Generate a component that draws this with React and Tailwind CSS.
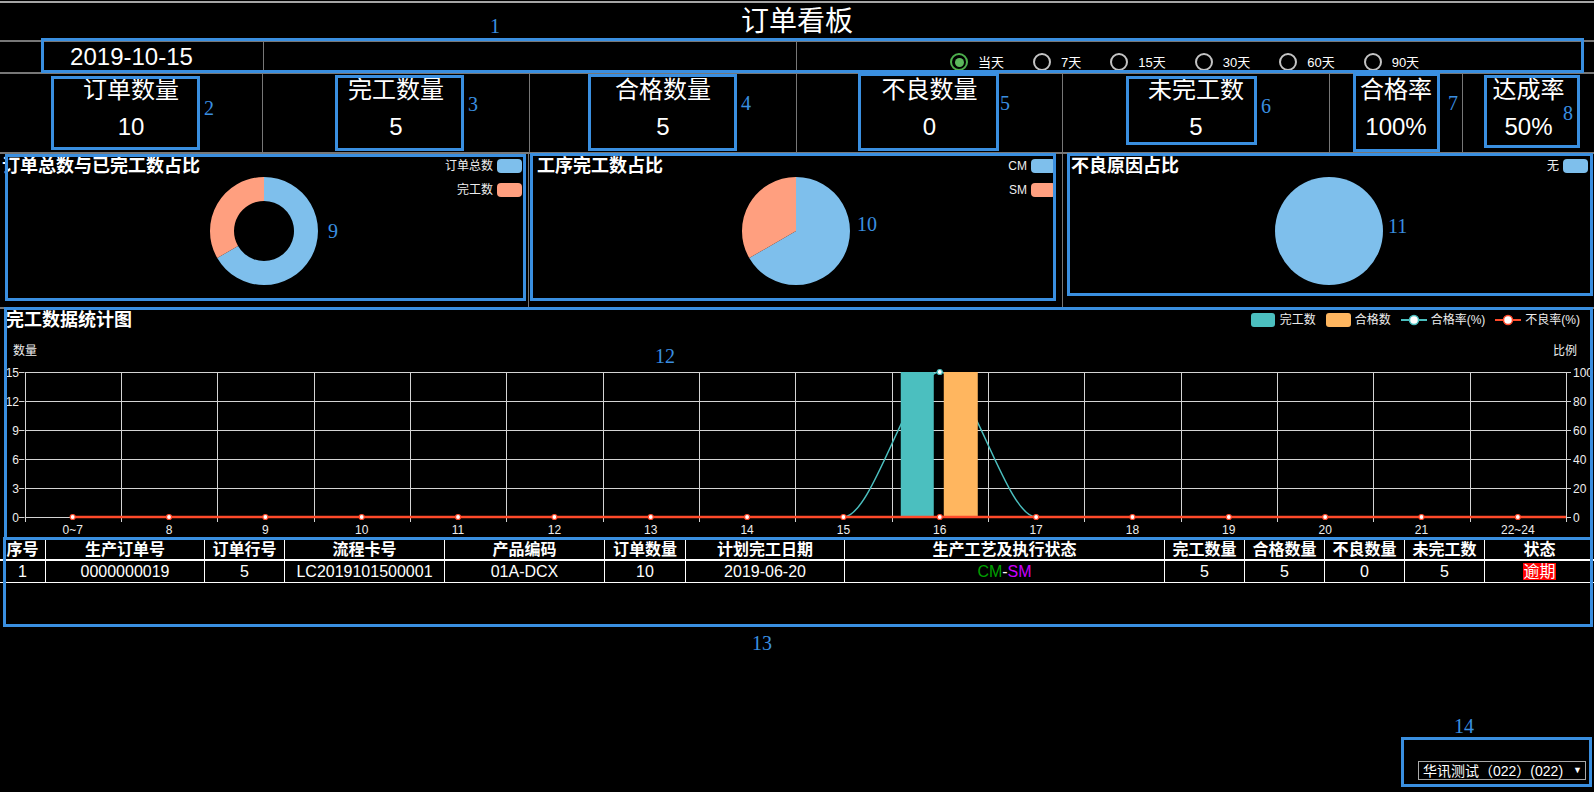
import React from "react";

const STATS = [
  { label: "订单数量", value: "10" },
  { label: "完工数量", value: "5" },
  { label: "合格数量", value: "5" },
  { label: "不良数量", value: "0" },
  { label: "未完工数", value: "5" },
  { label: "合格率", value: "100%" },
  { label: "达成率", value: "50%" },
];

const RANGES = ["当天", "7天", "15天", "30天", "60天", "90天"];

const HOURS = ["0~7", "8", "9", "10", "11", "12", "13", "14", "15", "16", "17", "18", "19", "20", "21", "22~24"];

const COLS = ["序号", "生产订单号", "订单行号", "流程卡号", "产品编码", "订单数量", "计划完工日期", "生产工艺及执行状态", "完工数量", "合格数量", "不良数量", "未完工数", "状态"];

// annotation overlays (numbered blue boxes)
const MARKS = [
  { n: "1", box: "left-[41px] top-[38px] w-[1543px] h-[35px]", label: "left-[490px] top-[16px]" },
  { n: "2", box: "left-[51px] top-[76px] w-[149px] h-[74px]", label: "left-[204px] top-[98px]" },
  { n: "3", box: "left-[335px] top-[75px] w-[129px] h-[76px]", label: "left-[468px] top-[94px]" },
  { n: "4", box: "left-[588px] top-[74px] w-[149px] h-[77px]", label: "left-[741px] top-[93px]" },
  { n: "5", box: "left-[858px] top-[73px] w-[141px] h-[78px]", label: "left-[1000px] top-[93px]" },
  { n: "6", box: "left-[1126px] top-[76px] w-[131px] h-[69px]", label: "left-[1261px] top-[96px]" },
  { n: "7", box: "left-[1353px] top-[73px] w-[87px] h-[79px]", label: "left-[1448px] top-[93px]" },
  { n: "8", box: "left-[1484px] top-[75px] w-[96px] h-[73px]", label: "left-[1563px] top-[103px]" },
  { n: "9", box: "left-[5px] top-[154px] w-[521px] h-[147px]", label: "left-[328px] top-[221px]" },
  { n: "10", box: "left-[530px] top-[153px] w-[526px] h-[148px]", label: "left-[857px] top-[214px]" },
  { n: "11", box: "left-[1067px] top-[153px] w-[526px] h-[143px]", label: "left-[1388px] top-[216px]" },
  { n: "12", box: "left-[4px] top-[307px] w-[1589px] h-[233px]", label: "left-[655px] top-[346px]" },
  { n: "13", box: "left-[3px] top-[537px] w-[1590px] h-[90px]", label: "left-[752px] top-[633px]" },
  { n: "14", box: "left-[1401px] top-[737px] w-[191px] h-[50px]", label: "left-[1454px] top-[716px]" },
];

function Mark({ n, box, label }) {
  return (
    <>
      <div className={`absolute border-[3px] border-[#3a8fe0] pointer-events-none ${box}`} />
      <span className={`absolute text-[20px] leading-none text-[#3a8fe0] font-['Liberation_Serif',serif] ${label}`}>{n}</span>
    </>
  );
}

function Radio({ label, checked }) {
  return (
    <div className="flex items-center">
      <span className={`w-[18px] h-[18px] rounded-full border-2 flex items-center justify-center ${checked ? "border-[#4cae4c]" : "border-[#c4c4c4]"}`}>
        {checked && <span className="w-[9px] h-[9px] rounded-full bg-[#5cb85c]" />}
      </span>
      <span className="ml-[10px] text-[13px] leading-none">{label}</span>
    </div>
  );
}

function PieLegend({ items }) {
  return (
    <div className="absolute top-[5px] right-[6px] flex flex-col items-end gap-[10px]">
      {items.map(it => (
        <div key={it.name} className="flex items-center gap-[4px] text-[12px] leading-none text-[#eee]">
          <span>{it.name}</span>
          <span className={`w-[25px] h-[14px] rounded-[4px] ${it.color}`} />
        </div>
      ))}
    </div>
  );
}

function ChartCell({ title, legend, pad, border, children }) {
  return (
    <div className={`relative ${border ? "border-l border-[#777]" : ""}`}>
      <div className={`h-[22px] text-[18px] font-bold leading-[24px] ${pad}`}>{title}</div>
      <PieLegend items={legend} />
      <div className="flex justify-center">{children}</div>
    </div>
  );
}

function OutputChart() {
  const left = 24.5, right = 1566, step = (right - left) / 16;
  const ys = [41, 70, 99, 128, 157, 186];
  const cx = i => left + (i + 0.5) * step;
  const gx = i => Math.round(left + i * step) + 0.5;
  const curve = `M ${cx(8)} 186 C ${cx(8) + 30} 186, ${cx(9) - 30} 41, ${cx(9)} 41 C ${cx(9) + 30} 41, ${cx(10) - 30} 186, ${cx(10)} 186`;
  return (
    <svg width="1594" height="209" className="block" fontFamily="Liberation Sans, Noto Sans CJK SC, sans-serif">
      <text x="13" y="24" fontSize="12" fill="#eee">数量</text>
      <text x="1577" y="24" fontSize="12" fill="#eee" textAnchor="end">比例</text>
      {ys.map(y => (
        <line key={y} x1={left} x2={right} y1={y + 0.5} y2={y + 0.5} stroke="#d4d4d4" />
      ))}
      {Array.from({ length: 17 }, (_, i) => (
        <line key={i} x1={gx(i)} x2={gx(i)} y1={41} y2={191} stroke="#d4d4d4" />
      ))}
      {ys.map((y, i) => (
        <g key={"t" + y}>
          <line x1={19} x2={24} y1={y + 0.5} y2={y + 0.5} stroke="#d4d4d4" />
          <line x1={1566} x2={1571} y1={y + 0.5} y2={y + 0.5} stroke="#d4d4d4" />
          <text x="19" y={y + 5} fontSize="12" fill="#eee" textAnchor="end">{15 - i * 3}</text>
          <text x="1573" y={y + 5} fontSize="12" fill="#eee">{100 - i * 20}</text>
        </g>
      ))}
      {HOURS.map((h, i) => (
        <text key={h} x={cx(i)} y="203" fontSize="12" fill="#eee" textAnchor="middle">{h}</text>
      ))}
      {/* 合格率 */}
      <path d={curve} fill="none" stroke="#4bbfbf" strokeWidth="1.5" />
      {/* bars */}
      <rect x={cx(9) - 39} y="41" width="33" height="145" fill="#4bbfbf" />
      <rect x={cx(9) + 4} y="41" width="34" height="145" fill="#ffb65f" />
      {/* 不良率 */}
      <line x1={cx(0)} x2={right} y1="186" y2="186" stroke="#ff4a2a" strokeWidth="2.5" />
      {HOURS.map((h, i) => (
        <circle key={"d" + h} cx={cx(i)} cy="186" r="2.5" fill="#fff" stroke="#ff4a2a" strokeWidth="1.2" />
      ))}
      <circle cx={cx(9)} cy="41" r="2.5" fill="#fff" stroke="#4bbfbf" strokeWidth="1.2" />
    </svg>
  );
}

function LineIcon({ color }) {
  return (
    <svg width="26" height="14">
      <line x1="0" x2="26" y1="7" y2="7" stroke={color} strokeWidth="2" />
      <circle cx="13" cy="7" r="4.5" fill="#fff" stroke={color} strokeWidth="1.5" />
    </svg>
  );
}

export default function App() {
  return (
    <div className="relative w-[1594px] h-[792px] overflow-hidden bg-black text-white font-['Liberation_Sans','Noto_Sans_CJK_SC',sans-serif]">
      <div className="h-[1px]" />
      <div className="h-[2px] bg-[#a5a5a5]" />
      <div className="h-[37px] flex items-center justify-center text-[28px] leading-none">订单看板</div>

      {/* date + range */}
      <div className="border-t-2 border-[#777] h-[32px] grid grid-cols-[263px_533px_1fr]">
        <div className="flex items-center justify-center text-[24px] leading-none">2019-10-15</div>
        <div className="border-l border-[#777]" />
        <div className="border-l border-[#777] flex items-end pb-[1px] pl-[153px] gap-[29px]">
          {RANGES.map((r, i) => <Radio key={r} label={r} checked={i === 0} />)}
        </div>
      </div>

      {/* stats */}
      <div className="border-t-2 border-[#777] h-[80px] grid grid-cols-[262px_267px_267px_266px_267px_133px_1fr]">
        {STATS.map((s, i) => (
          <div key={s.label} className={`text-center text-[24px] ${i ? "border-l border-[#777]" : ""}`}>
            <div className="leading-[32px]">{s.label}</div>
            <div className="leading-[42px]">{s.value}</div>
          </div>
        ))}
      </div>

      {/* pies */}
      <div className="border-t-2 border-[#777] h-[155px] grid grid-cols-[528px_534px_1fr]">
        <ChartCell title="订单总数与已完工数占比" pad="pl-[2px]"
          legend={[{ name: "订单总数", color: "bg-[#7ebfec]" }, { name: "完工数", color: "bg-[#ff9f7f]" }]}>
          <svg width="110" height="110">
            <path d="M 55 1 A 54 54 0 1 1 8.23 82 L 29.02 70 A 30 30 0 1 0 55 25 Z" fill="#7ebfec" />
            <path d="M 8.23 82 A 54 54 0 0 1 55 1 L 55 25 A 30 30 0 0 0 29.02 70 Z" fill="#ff9f7f" />
          </svg>
        </ChartCell>
        <ChartCell title="工序完工数占比" pad="pl-[8px]" border
          legend={[{ name: "CM", color: "bg-[#7ebfec]" }, { name: "SM", color: "bg-[#ff9f7f]" }]}>
          <svg width="110" height="110">
            <path d="M 55 55 L 55 1 A 54 54 0 1 1 8.23 82 Z" fill="#7ebfec" />
            <path d="M 55 55 L 8.23 82 A 54 54 0 0 1 55 1 Z" fill="#ff9f7f" />
          </svg>
        </ChartCell>
        <ChartCell title="不良原因占比" pad="pl-[8px]" border
          legend={[{ name: "无", color: "bg-[#7ebfec]" }]}>
          <svg width="110" height="110">
            <circle cx="55" cy="55" r="54" fill="#7ebfec" />
          </svg>
        </ChartCell>
      </div>

      {/* output chart */}
      <div className="border-t-2 border-[#777] h-[233px]">
        <div className="h-[22px] flex items-center justify-between">
          <div className="pl-[6px] text-[18px] font-bold leading-[22px]">完工数据统计图</div>
          <div className="flex items-center gap-[10px] pr-[14px] text-[12px] leading-none text-[#eee]">
            <div className="flex items-center gap-[5px]">
              <span className="w-[24px] h-[14px] rounded-[3px] bg-[#4bbfbf]" />完工数
            </div>
            <div className="flex items-center gap-[4px]">
              <span className="w-[25px] h-[14px] rounded-[3px] bg-[#ffb65f]" />合格数
            </div>
            <div className="flex items-center gap-[4px]">
              <LineIcon color="#4bbfbf" />合格率(%)
            </div>
            <div className="flex items-center gap-[4px]">
              <LineIcon color="#ff4a2a" />不良率(%)
            </div>
          </div>
        </div>
        <OutputChart />
      </div>

      {/* order table */}
      <div className="text-[16px] text-center">
        <div className="grid grid-cols-[45px_159px_80px_160px_160px_81px_159px_320px_80px_80px_80px_80px_1fr] h-[21px] border-b-2 border-white font-bold leading-[19px]">
          {COLS.map((c, i) => (
            <div key={c} className={`whitespace-nowrap ${i ? "border-l border-white" : ""}`}>{c}</div>
          ))}
        </div>
        <div className="grid grid-cols-[45px_159px_80px_160px_160px_81px_159px_320px_80px_80px_80px_80px_1fr] h-[22px] border-b border-white leading-[21px]">
          <div>1</div>
          <div className="border-l border-white">0000000019</div>
          <div className="border-l border-white">5</div>
          <div className="border-l border-white">LC2019101500001</div>
          <div className="border-l border-white">01A-DCX</div>
          <div className="border-l border-white">10</div>
          <div className="border-l border-white">2019-06-20</div>
          <div className="border-l border-white">
            <span className="text-[#00a000]">CM</span>-<span className="text-[#cc00ff]">SM</span>
          </div>
          <div className="border-l border-white">5</div>
          <div className="border-l border-white">5</div>
          <div className="border-l border-white">0</div>
          <div className="border-l border-white">5</div>
          <div className="border-l border-white flex items-center justify-center">
            <span className="bg-[#ff0000] leading-[17px]">逾期</span>
          </div>
        </div>
      </div>

      {/* company select */}
      <div className="mt-[178px] flex justify-end pr-[8px]">
        <div className="w-[168px] h-[19px] border border-[#a9a9a9] flex items-center justify-between pl-[4px] pr-[3px] text-[14px] leading-none">
          <span>华讯测试（022）(022)</span>
          <span className="text-[9px]">▼</span>
        </div>
      </div>

      {MARKS.map(m => <Mark key={m.n} {...m} />)}
    </div>
  );
}
